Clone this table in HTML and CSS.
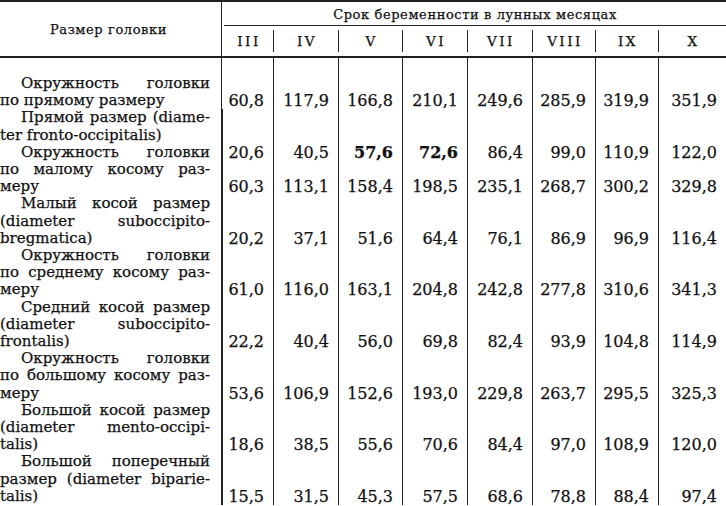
FILE: index.html
```html
<!DOCTYPE html>
<html lang="ru">
<head>
<meta charset="utf-8">
<title>Размер головки</title>
<link rel="stylesheet" href="styles.css">
</head>
<body>
<div class="sheet">
  <div class="head">
    <div class="head-label">Размер головки</div>
    <div class="head-title">Срок беременности в лунных месяцах</div>
    <div class="num first">III</div>
    <div class="num">IV</div>
    <div class="num">V</div>
    <div class="num">VI</div>
    <div class="num">VII</div>
    <div class="num">VIII</div>
    <div class="num">IX</div>
    <div class="num">X</div>
  </div>
  <div class="body">
    <div class="labels">
      <p class="item"><span class="ln j ind">Окружность головки</span><span class="ln">по прямому размеру</span></p>
      <p class="item"><span class="ln j ind">Прямой размер (diame-</span><span class="ln">ter fronto-occipitalis)</span></p>
      <p class="item"><span class="ln j ind">Окружность головки</span><span class="ln j">по малому косому раз-</span><span class="ln">меру</span></p>
      <p class="item"><span class="ln j ind">Малый косой размер</span><span class="ln j">(diameter suboccipito-</span><span class="ln">bregmatica)</span></p>
      <p class="item"><span class="ln j ind">Окружность головки</span><span class="ln j">по среднему косому раз-</span><span class="ln">меру</span></p>
      <p class="item"><span class="ln j ind">Средний косой размер</span><span class="ln j">(diameter suboccipito-</span><span class="ln">frontalis)</span></p>
      <p class="item"><span class="ln j ind">Окружность головки</span><span class="ln j">по большому косому раз-</span><span class="ln">меру</span></p>
      <p class="item"><span class="ln j ind">Большой косой размер</span><span class="ln j">(diameter mento-occipi-</span><span class="ln">talis)</span></p>
      <p class="item"><span class="ln j ind">Большой поперечный</span><span class="ln j">размер (diameter biparie-</span><span class="ln">talis)</span></p>
    </div>

    <div class="v">60,8</div><div class="v">117,9</div><div class="v">166,8</div><div class="v">210,1</div><div class="v">249,6</div><div class="v">285,9</div><div class="v">319,9</div><div class="v">351,9</div>
    <div class="v">20,6</div><div class="v">40,5</div><div class="v b">57,6</div><div class="v b">72,6</div><div class="v">86,4</div><div class="v">99,0</div><div class="v">110,9</div><div class="v">122,0</div>
    <div class="v">60,3</div><div class="v">113,1</div><div class="v">158,4</div><div class="v">198,5</div><div class="v">235,1</div><div class="v">268,7</div><div class="v">300,2</div><div class="v">329,8</div>
    <div class="v">20,2</div><div class="v">37,1</div><div class="v">51,6</div><div class="v">64,4</div><div class="v">76,1</div><div class="v">86,9</div><div class="v">96,9</div><div class="v">116,4</div>
    <div class="v">61,0</div><div class="v">116,0</div><div class="v">163,1</div><div class="v">204,8</div><div class="v">242,8</div><div class="v">277,8</div><div class="v">310,6</div><div class="v">341,3</div>
    <div class="v">22,2</div><div class="v">40,4</div><div class="v">56,0</div><div class="v">69,8</div><div class="v">82,4</div><div class="v">93,9</div><div class="v">104,8</div><div class="v">114,9</div>
    <div class="v">53,6</div><div class="v">106,9</div><div class="v">152,6</div><div class="v">193,0</div><div class="v">229,8</div><div class="v">263,7</div><div class="v">295,5</div><div class="v">325,3</div>
    <div class="v">18,6</div><div class="v">38,5</div><div class="v">55,6</div><div class="v">70,6</div><div class="v">84,4</div><div class="v">97,0</div><div class="v">108,9</div><div class="v">120,0</div>
    <div class="v">15,5</div><div class="v">31,5</div><div class="v">45,3</div><div class="v">57,5</div><div class="v">68,6</div><div class="v">78,8</div><div class="v">88,4</div><div class="v">97,4</div>
  </div>
</div>
</body>
</html>
```

FILE: styles.css
```css
html, body {
  margin: 0;
  padding: 0;
  background: #ffffff;
}

body {
  color: #111111;
  font-family: "DejaVu Serif", "Liberation Serif", serif;
  -webkit-text-stroke: 0.25px #111111;
}

.sheet {
  width: 726px;
  height: 506px;
  overflow: hidden;
}

/* ---------- header ---------- */
.head {
  display: grid;
  grid-template-columns: 222px 51px 65px 64px 65px 65px 63px 63px 68px;
  grid-template-rows: 24px 30px;
  border-top: 2px solid #1e1e1e;
  border-bottom: 2px solid #1e1e1e;
  font-size: 13px;
  letter-spacing: 0.6px;
}

.head-label {
  grid-column: 1;
  grid-row: 1 / 3;
  display: flex;
  align-items: center;
  justify-content: center;
  border-right: 1px solid #222;
  padding-right: 4px;
  box-sizing: border-box;
}

.head-title {
  grid-column: 2 / -1;
  grid-row: 1;
  margin-left: 2px;
  display: flex;
  align-items: center;
  justify-content: center;
  border-bottom: 1px solid #222;
  box-sizing: border-box;
  padding-top: 1px;
}

.num {
  display: flex;
  align-items: center;
  justify-content: center;
  font-size: 13.5px;
  letter-spacing: 2.5px;
  padding-left: 3px;
  background-image: linear-gradient(#222, #222);
  background-repeat: no-repeat;
  background-size: 1px 74%;
  background-position: 0 50%;
}

.num.first {
  background-image: none;
}

/* ---------- body ---------- */
.body {
  display: grid;
  grid-template-columns: 222px 51px 65px 64px 65px 65px 63px 63px 68px;
  grid-template-rows: 51.4px 51.6px 34.4px 51.6px 51.6px 51.6px 51.6px 51.6px 51.6px;
  font-size: 16px;
  line-height: 17.2px;
}

.labels {
  grid-column: 1;
  grid-row: 1 / -1;
  padding: 17px 11px 0 0;
  border-right: 1px solid #222;
  box-sizing: border-box;
  font-size: 15px;
}

.item {
  margin: 0;
}

.ln {
  display: block;
  white-space: nowrap;
}

.ln.j {
  text-align: justify;
  text-align-last: justify;
}

.ln.ind {
  text-indent: 21px;
}

.v {
  display: flex;
  align-items: flex-end;
  justify-content: flex-end;
  padding-right: 9px;
  border-left: 1px solid #222;
}

.body .labels + .v {
  border-left: none;
}

.v.b {
  font-weight: bold;
}
```
